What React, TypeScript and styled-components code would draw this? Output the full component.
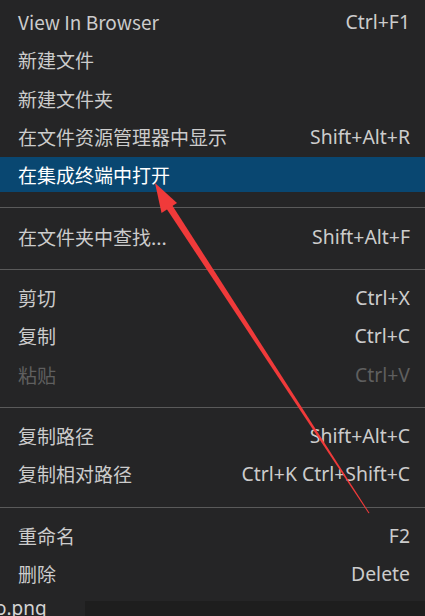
import React from "react";
import styled, { createGlobalStyle } from "styled-components";

const Global = createGlobalStyle`
  html, body { margin: 0; padding: 0; background: #1e1e1e; }
  body { width: 425px; height: 616px; overflow: hidden; }
`;

const Page = styled.div`
  position: relative;
  width: 425px;
  height: 616px;
  overflow: hidden;
  display: flex;
  flex-direction: column;
  font-family: "Noto Sans", "Noto Sans CJK SC", sans-serif;
`;

const Menu = styled.div`
  background: #252526;
  display: flex;
  flex-direction: column;
  gap: 3.25px;
  padding: 4px 0 10px;
  height: 601px;
  box-sizing: border-box;
`;

const Row = styled.div<{ $active?: boolean; $disabled?: boolean }>`
  height: 35px;
  flex: none;
  display: flex;
  align-items: center;
  justify-content: space-between;
  padding: 0 15px 0 18px;
  font-size: 19px;
  background: ${(p) => (p.$active ? "#094771" : "transparent")};
  color: ${(p) => (p.$active ? "#ffffff" : p.$disabled ? "#5f5f5f" : "#cccccc")};
`;

const Label = styled.span`
  font-family: "Noto Sans CJK SC", "Noto Sans", sans-serif;
  white-space: nowrap;
`;

const Keys = styled.span`
  white-space: nowrap;
  font-size: 19.4px;
`;

const Separator = styled.div`
  height: 1px;
  flex: none;
  background: #5a5a5a;
  margin: 12px 0 7px;
`;

const Bottom = styled.div`
  flex: 1;
  display: flex;
  background: #1e1e1e;
`;

const FileTab = styled.div`
  width: 85px;
  background: #252526;
  color: #d4d4d4;
  font-size: 19px;
  line-height: 13px;
  overflow: hidden;
  white-space: nowrap;
  padding-top: 1px;
  text-indent: -5px;
`;

const Arrow = styled.svg`
  position: absolute;
  left: 0;
  top: 0;
  pointer-events: none;
`;

type Item = { label: string; keys?: string; active?: boolean; disabled?: boolean };

const groups: Item[][] = [
  [
    { label: "View In Browser", keys: "Ctrl+F1" },
    { label: "新建文件" },
    { label: "新建文件夹" },
    { label: "在文件资源管理器中显示", keys: "Shift+Alt+R" },
    { label: "在集成终端中打开", active: true },
  ],
  [{ label: "在文件夹中查找...", keys: "Shift+Alt+F" }],
  [
    { label: "剪切", keys: "Ctrl+X" },
    { label: "复制", keys: "Ctrl+C" },
    { label: "粘贴", keys: "Ctrl+V", disabled: true },
  ],
  [
    { label: "复制路径", keys: "Shift+Alt+C" },
    { label: "复制相对路径", keys: "Ctrl+K Ctrl+Shift+C" },
  ],
  [
    { label: "重命名", keys: "F2" },
    { label: "删除", keys: "Delete" },
  ],
];

export default function App() {
  return (
    <>
      <Global />
      <Page>
        <Menu>
          {groups.map((g, gi) => (
            <React.Fragment key={gi}>
              {gi > 0 && <Separator />}
              {g.map((it) => (
                <Row key={it.label} $active={it.active} $disabled={it.disabled}>
                  <Label>{it.label}</Label>
                  {it.keys && <Keys>{it.keys}</Keys>}
                </Row>
              ))}
            </React.Fragment>
          ))}
        </Menu>
        <Bottom>
          <FileTab>o.png</FileTab>
        </Bottom>
        <Arrow width="425" height="616" viewBox="0 0 425 616">
          <polygon points="166.4,208.6 172,205 369.5,513 368.5,513.2" fill="#f03a3a" />
          <polygon points="155,183 177,203 161.5,213" fill="#f03a3a" />
        </Arrow>
      </Page>
    </>
  );
}
